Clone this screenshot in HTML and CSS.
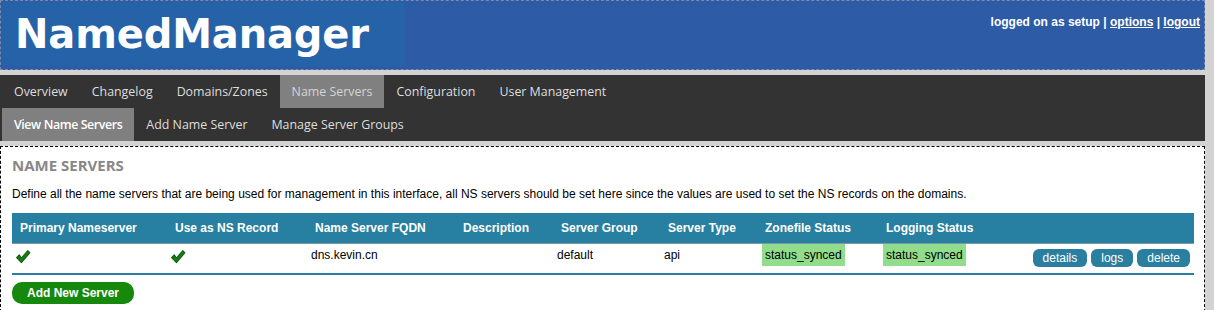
FILE: index.html
```html
<!DOCTYPE html>
<html>
<head>
<meta charset="utf-8">
<link rel="stylesheet" href="styles.css">
</head>
<body>
<div class="header">
  <div class="logo">NamedManager</div>
  <div class="userbar">logged on as setup | <a href="#">options</a> | <a href="#">logout</a></div>
</div>
<div class="nav">
  <div class="navrow">
    <a class="tab" href="#">Overview</a>
    <a class="tab" href="#">Changelog</a>
    <a class="tab" href="#">Domains/Zones</a>
    <a class="tab active" href="#">Name Servers</a>
    <a class="tab" href="#">Configuration</a>
    <a class="tab" href="#">User Management</a>
  </div>
  <div class="navrow">
    <a class="tab active sub" href="#">View Name Servers</a>
    <a class="tab" href="#">Add Name Server</a>
    <a class="tab" href="#">Manage Server Groups</a>
  </div>
</div>
<div class="content">
  <h2 class="title">NAME SERVERS</h2>
  <p class="desc">Define all the name servers that are being used for management in this interface, all NS servers should be set here since the values are used to set the NS records on the domains.</p>
  <table class="grid">
    <thead>
      <tr>
        <th class="c1">Primary Nameserver</th>
        <th class="c2">Use as NS Record</th>
        <th class="c3">Name Server FQDN</th>
        <th class="c4">Description</th>
        <th class="c5">Server Group</th>
        <th class="c6">Server Type</th>
        <th class="c7">Zonefile Status</th>
        <th class="c8">Logging Status</th>
        <th class="c9"></th>
      </tr>
    </thead>
    <tbody>
      <tr>
        <td><svg class="check" width="16" height="15" viewBox="0 0 15 14"><path d="M1.5 8 L4 5.5 L6 8.5 L12 1.5 L14 3.5 L6 12.8 Z" fill="#1c7d16" stroke="#0f5e0c" stroke-width="1" stroke-linejoin="round"/></svg></td>
        <td><svg class="check" width="16" height="15" viewBox="0 0 15 14"><path d="M1.5 8 L4 5.5 L6 8.5 L12 1.5 L14 3.5 L6 12.8 Z" fill="#1c7d16" stroke="#0f5e0c" stroke-width="1" stroke-linejoin="round"/></svg></td>
        <td>dns.kevin.cn</td>
        <td></td>
        <td>default</td>
        <td>api</td>
        <td><span class="status">status_synced</span></td>
        <td><span class="status">status_synced</span></td>
        <td class="actions"><div class="btns"><a class="btn" href="#">details</a><a class="btn" href="#">logs</a><a class="btn" href="#">delete</a></div></td>
      </tr>
    </tbody>
  </table>
  <a class="addbtn" href="#">Add New Server</a>
</div>
</body>
</html>
```

FILE: styles.css
```css
html, body {
  margin: 0;
  padding: 0;
  background: #d3d3d3;
}
body {
  width: 1205px;
  font-family: "Liberation Sans", Arial, sans-serif;
}
.header {
  box-sizing: border-box;
  height: 70px;
  background: #2e5ba5;
  border: 1px dashed #7a8aa8;
  padding: 1px;
  display: flex;
  justify-content: space-between;
  align-items: flex-start;
}
.logo {
  width: 403px;
  height: 64px;
  box-sizing: border-box;
  background: #2562a8;
  color: #fff;
  font-family: "DejaVu Sans", sans-serif;
  font-weight: bold;
  font-size: 40px;
  letter-spacing: -0.15px;
  line-height: 64px;
  padding-left: 13px;
}
.userbar {
  color: #fff;
  font-weight: bold;
  font-size: 12px;
  padding-top: 13px;
  padding-right: 3px;
}
.userbar a {
  color: #fff;
  text-decoration: underline;
}
.nav {
  margin-top: 5px;
  background: #333;
  height: 66px;
  padding-left: 2px;
}
.navrow {
  display: flex;
  height: 33px;
}
.tab {
  display: block;
  padding: 1px 12px 0;
  line-height: 32px;
  color: #dedede;
  text-decoration: none;
  font-family: "Open Sans", sans-serif;
  font-size: 12.4px;
}
.tab.active {
  background: #808080;
  color: #d4d4d4;
}
.tab.sub {
  color: #fff;
  font-weight: 600;
  letter-spacing: -0.4px;
}
.content {
  margin-top: 5px;
  background: #fff;
  border: 1px dashed #000;
  border-bottom: none;
  height: 170px;
  padding: 0 10px 0 11px;
}
.title {
  margin: 0;
  padding-top: 7px;
  font-family: "Open Sans", sans-serif;
  font-weight: bold;
  font-size: 15px;
  color: #888;
  line-height: 22px;
}
.desc {
  margin: 0;
  padding-top: 10px;
  font-size: 12px;
  line-height: 16px;
  color: #000;
}
.grid {
  margin-top: 11px;
  width: 1182px;
  border-collapse: collapse;
  font-size: 12px;
}
.grid th {
  background: #2780a1;
  color: #fff;
  font-weight: bold;
  text-align: left;
  height: 30px;
  padding: 0 0 0 8px;
  border-bottom: 1px solid #7a9aa8;
  box-sizing: border-box;
}
.grid td {
  height: 22px;
  padding: 0 0 6px 4px;
  vertical-align: top;
  line-height: 22px;
  border-bottom: 2px solid #2b7d9d;
  color: #000;
}
.c1 { width: 155px; }
.c2 { width: 140px; }
.c3 { width: 148px; }
.c4 { width: 98px; }
.c5 { width: 107px; }
.c6 { width: 97px; }
.c7 { width: 121px; }
.c8 { width: 120px; }
.check {
  display: block;
  margin: 5px 0 0 -1px;
}
.status {
  display: inline-block;
  background: #91dd8b;
  margin-left: 1px;
  padding: 0 3px;
  line-height: 22px;
}
.grid td.actions {
  padding-right: 4px;
}
.btns {
  display: flex;
  justify-content: flex-end;
  gap: 4px;
  padding-top: 5px;
}
.btn {
  display: block;
  background: #2a7fa0;
  color: #fff;
  text-decoration: none;
  font-size: 12px;
  padding: 0 10px;
  line-height: 18px;
  border-radius: 6px;
}
.addbtn {
  display: inline-block;
  margin-top: 7px;
  background: #16880b;
  color: #fff;
  font-weight: bold;
  font-size: 12px;
  text-decoration: none;
  padding: 0 15px;
  line-height: 22px;
  border-radius: 10px;
}
```
